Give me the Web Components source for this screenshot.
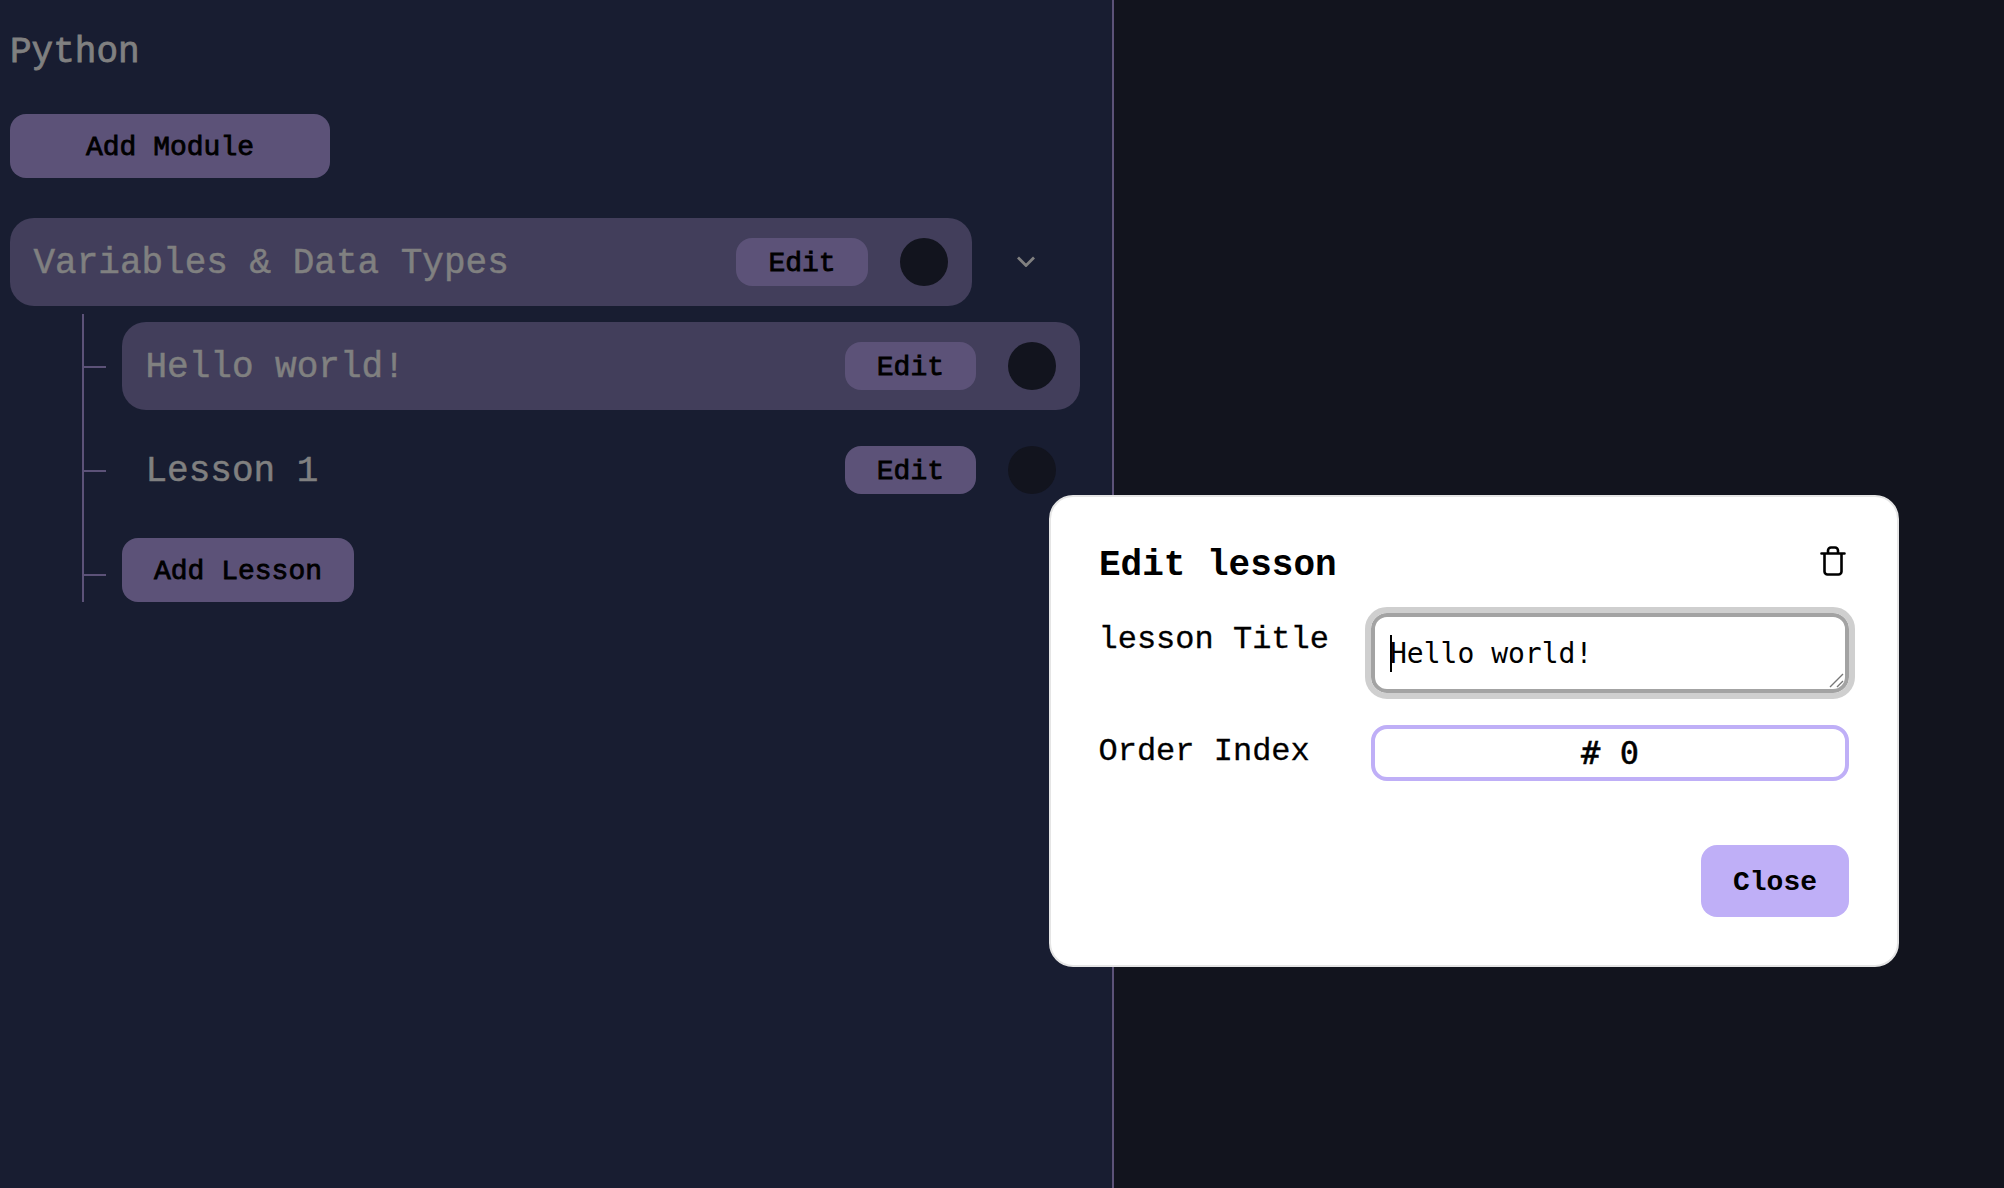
<!DOCTYPE html>
<html lang="en"><head><meta charset="utf-8"><title>Python</title>
<style>
html,body{margin:0;padding:0;height:100%;background:#12141e}
body{font-family:"Liberation Mono",monospace;overflow:hidden}
</style></head>
<body>
<app-shell>
  <side-panel slot="side" heading="Python">
    <pill-button wide>Add Module</pill-button>
    <tree-group>
      <tree-row slot="head" active style="--edit-w:132px">Variables &amp; Data Types</tree-row>
      <tree-row active>Hello world!</tree-row>
      <tree-row>Lesson 1</tree-row>
      <pill-button slot="add">Add Lesson</pill-button>
    </tree-group>
  </side-panel>
  <edit-dialog slot="dialog" heading="Edit lesson">
    <form-field label="lesson Title"><fake-textarea>Hello world!</fake-textarea></form-field>
    <form-field label="Order Index"><number-box>#&nbsp;0</number-box></form-field>
  </edit-dialog>
</app-shell>
<script>
function def(name, html, extra){
  const t=document.createElement('template');t.innerHTML=html;
  customElements.define(name,class extends HTMLElement{
    constructor(){super();this.attachShadow({mode:'open'}).appendChild(t.content.cloneNode(true));}
    connectedCallback(){if(extra)extra(this);}
  });
}
def('app-shell',`<style>
:host{display:block;position:relative;width:2004px;height:1188px;background:#12141e;overflow:hidden}
.dlg{position:absolute;left:1049px;top:495px}
</style><slot name="side"></slot><div class="dlg"><slot name="dialog"></slot></div>`);

def('side-panel',`<style>
:host{display:block;box-sizing:border-box;width:1114px;height:1188px;background:#181d31;border-right:2px solid #5c5278;padding:10px}
h1{margin:0 0 18px;height:86px;font:400 36px/86px "Liberation Mono",monospace;color:#808080;-webkit-text-stroke:.8px #808080}
::slotted(tree-group){margin-top:40px}
</style><h1></h1><slot></slot>`,el=>{el.shadowRoot.querySelector('h1').textContent=el.getAttribute('heading');});

def('pill-button',`<style>
:host{display:inline-flex;align-items:center;justify-content:center;box-sizing:border-box;height:64px;padding:2px 32px 0;background:#5c5278;color:#000;border-radius:16px;font:400 28px "Liberation Mono",monospace;-webkit-text-stroke:.8px #000;white-space:nowrap}
:host([wide]){width:320px;padding:2px 0 0}
:host([small]){width:var(--edit-w,131.2px);height:48px;padding:2px 0 0;border-radius:16px}
</style><slot></slot>`);

def('tree-group',`<style>
:host{display:block;width:1070px}
.head{display:flex;align-items:center}
.head ::slotted(*){flex:1}
.chev{flex:none;width:108px;display:flex;justify-content:center}
.chev svg{margin:-2px 0 0 -1px}
.branch{display:flex;margin-top:8px}
.lines{flex:none;width:24px;height:288px;margin:0 16px 0 72px}
.list{flex:1;display:flex;flex-direction:column;gap:16px;padding-top:8px;align-items:stretch}
.add{margin-top:8px}
</style>
<div class="head"><slot name="head"></slot>
  <div class="chev"><svg width="18" height="11" viewBox="0 0 18 11" fill="none"><path d="M1 1.5 9 9.5 17 1.5" stroke="#808080" stroke-width="2.8"/></svg></div>
</div>
<div class="branch">
  <svg class="lines" viewBox="0 0 24 288" fill="none" stroke="#5c5278" stroke-width="2"><path d="M1 0V288M1 53H24M1 157H24M1 261H24"/></svg>
  <div class="list"><slot></slot><div class="add"><slot name="add"></slot></div></div>
</div>`);

def('tree-row',`<style>
:host{display:flex;align-items:center;box-sizing:border-box;height:88px;padding:0 24px;border-radius:24px;color:#808080;font:400 36px "Liberation Mono",monospace;-webkit-text-stroke:.5px #808080}
:host([active]){background:#423e5b}
.t{flex:1;white-space:pre;padding-top:3px;margin-left:-.5px}
.dot{width:48px;height:48px;border-radius:50%;background:#12141e;margin-left:32px;flex:none}
</style><span class="t"><slot></slot></span><pill-button small>Edit</pill-button><span class="dot"></span>`);

def('edit-dialog',`<style>
:host{display:block;box-sizing:border-box;width:850px;height:472px;background:#fff;border:2px solid #e5e5e5;border-radius:24px;padding:48px;color:#000}
.top{display:flex;justify-content:space-between;align-items:flex-start;height:44px;margin-bottom:24px}
h2{margin:0;font:700 36px/42px "Liberation Mono",monospace;white-space:pre}
svg{margin:1px 3px 0 0}
.rows{display:flex;flex-direction:column;gap:32px}
.foot{display:flex;justify-content:flex-end;margin:64px 0 0}
.close{display:flex;align-items:center;justify-content:center;box-sizing:border-box;padding-top:2px;width:148px;height:72px;background:#bfaff7;border-radius:16px;font:700 28px "Liberation Mono",monospace}
</style>
<div class="top"><h2></h2>
<svg width="26" height="30" viewBox="0 0 26 30" fill="none" stroke="#000" stroke-width="2.6" stroke-linecap="round" stroke-linejoin="round"><path d="M1.5 7.5H24.5M8 7.5V4.5A3 3 0 0 1 11 1.5H15A3 3 0 0 1 18 4.5V7.5M4.5 7.5V25.5A3 3 0 0 0 7.5 28.5H18.5A3 3 0 0 0 21.5 25.5V7.5"/></svg></div>
<div class="rows"><slot></slot></div>
<div class="foot"><div class="close">Close</div></div>`,el=>{el.shadowRoot.querySelector('h2').textContent=el.getAttribute('heading');});

def('form-field',`<style>
:host{display:grid;grid-template-columns:272px 478px;align-items:start}
.l{font:400 32px/53px "Liberation Mono",monospace;white-space:pre;margin-left:-.5px;-webkit-text-stroke:.3px #000}
</style><div class="l"></div><slot></slot>`,el=>{el.shadowRoot.querySelector('.l').textContent=el.getAttribute('label');});

def('fake-textarea',`<style>
:host{display:block;position:relative;box-sizing:border-box;height:80px;border:4px solid #a3a3a3;outline:6px solid #cfcfcf;border-radius:16px;padding:18px 15px 0;font:400 28px/38px "DejaVu Sans Mono",monospace;color:#000}
.caret{display:inline-block;width:2px;height:37px;background:#000;margin-right:-2px;vertical-align:-9px}
svg{position:absolute;right:0;bottom:0}
</style><span class="caret"></span><slot></slot>
<svg width="16" height="16" viewBox="0 0 16 16" fill="none" stroke="#777" stroke-width="1.4"><path d="M1 14 14 1M8 14 14 8"/></svg>`);

def('number-box',`<style>
:host{display:flex;align-items:center;justify-content:center;box-sizing:border-box;height:56px;border:4px solid #bfaff7;border-radius:16px;font:400 32px "DejaVu Sans Mono",monospace;-webkit-text-stroke:.5px #000;color:#000}
</style><slot></slot>`);
</script>
</body></html>
